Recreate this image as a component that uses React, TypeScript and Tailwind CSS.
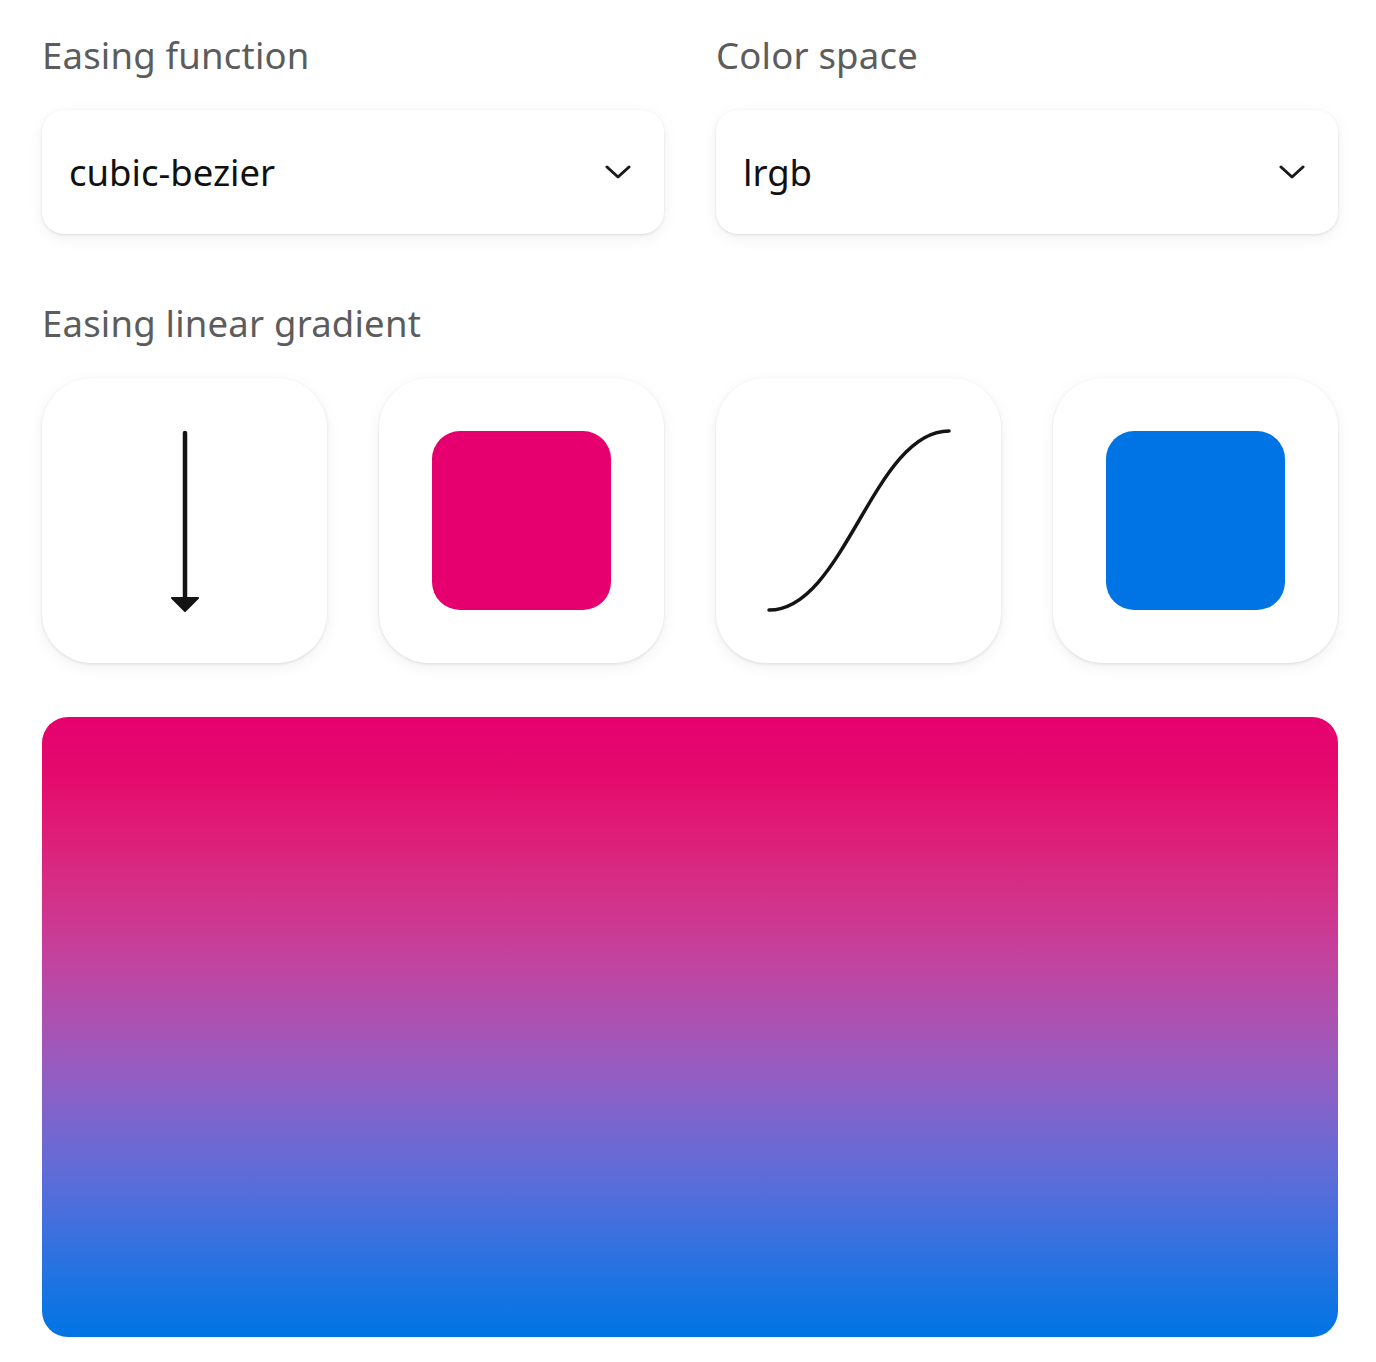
const GRADIENT =
  'bg-[linear-gradient(to_bottom,#e6006f_0%,#e40b6d_10%,#dd2079_20%,#d2338b_30%,#c044a0_40%,#a953b4_50%,#8c60c6_60%,#6b69d4_70%,#486fdd_80%,#2273e2_90%,#0074e4_100%)]'

function Chevron() {
  return (
    <svg width="26" height="16" viewBox="0 0 26 16" fill="none" aria-hidden="true">
      <polyline points="2,3 13,13 24,3" stroke="#1a1a1a" strokeWidth="3" strokeLinecap="round" strokeLinejoin="round" />
    </svg>
  )
}

function Select({ label, value }: { label: string; value: string }) {
  return (
    <div className="flex flex-col">
      <label className="text-[36.5px] leading-[50px] text-[#5c5c5c] tracking-[0.2px]">{label}</label>
      <div className="mt-[30px] h-[124px] rounded-[22px] bg-white shadow-[0_1px_3px_rgba(0,0,0,0.10),0_4px_16px_rgba(0,0,0,0.06)] flex items-center justify-between pl-[27px] pr-[33px]">
        <span className="text-[36.5px] text-[#111]">{value}</span>
        <Chevron />
      </div>
    </div>
  )
}

function Tile({ children }: { children: React.ReactNode }) {
  return (
    <div className="aspect-square rounded-[50px] bg-white shadow-[0_1px_3px_rgba(0,0,0,0.10),0_4px_16px_rgba(0,0,0,0.06)] flex items-center justify-center">
      {children}
    </div>
  )
}

export default function App() {
  return (
    <div className="min-h-[1362px] bg-white pl-[42px] pr-[38px] pt-[30px] pb-[25px] font-['Noto_Sans',sans-serif]">
      <div className="grid grid-cols-2 gap-x-[52px]">
        <Select label="Easing function" value="cubic-bezier" />
        <Select label="Color space" value="lrgb" />
      </div>

      <p className="mt-[64px] text-[36.5px] leading-[50px] text-[#5c5c5c] tracking-[0.2px]">Easing linear gradient</p>

      <div className="mt-[30px] grid grid-cols-4 gap-[52px]">
        <Tile>
          <svg width="180" height="184" viewBox="0 0 180 184" fill="none" className="mt-[2px]" aria-hidden="true">
            <line x1="90" y1="3" x2="90" y2="170" stroke="#141414" strokeWidth="4.5" strokeLinecap="round" />
            <polygon points="77,168 103,168 90,181" fill="#141414" stroke="#141414" strokeWidth="2" strokeLinejoin="round" />
          </svg>
        </Tile>
        <Tile>
          <div className="w-[179px] h-[179px] rounded-[28px] bg-[#e6006f]" />
        </Tile>
        <Tile>
          <svg width="180" height="180" viewBox="0 0 180 180" fill="none" className="overflow-visible" aria-hidden="true">
            <path d="M 0 179 C 75.6 179, 104.4 0, 180 0" stroke="#141414" strokeWidth="3.5" strokeLinecap="round" />
          </svg>
        </Tile>
        <Tile>
          <div className="w-[179px] h-[179px] rounded-[28px] bg-[#0074e4]" />
        </Tile>
      </div>

      <div className={`mt-[54px] h-[620px] rounded-[26px] ${GRADIENT}`} />
    </div>
  )
}
